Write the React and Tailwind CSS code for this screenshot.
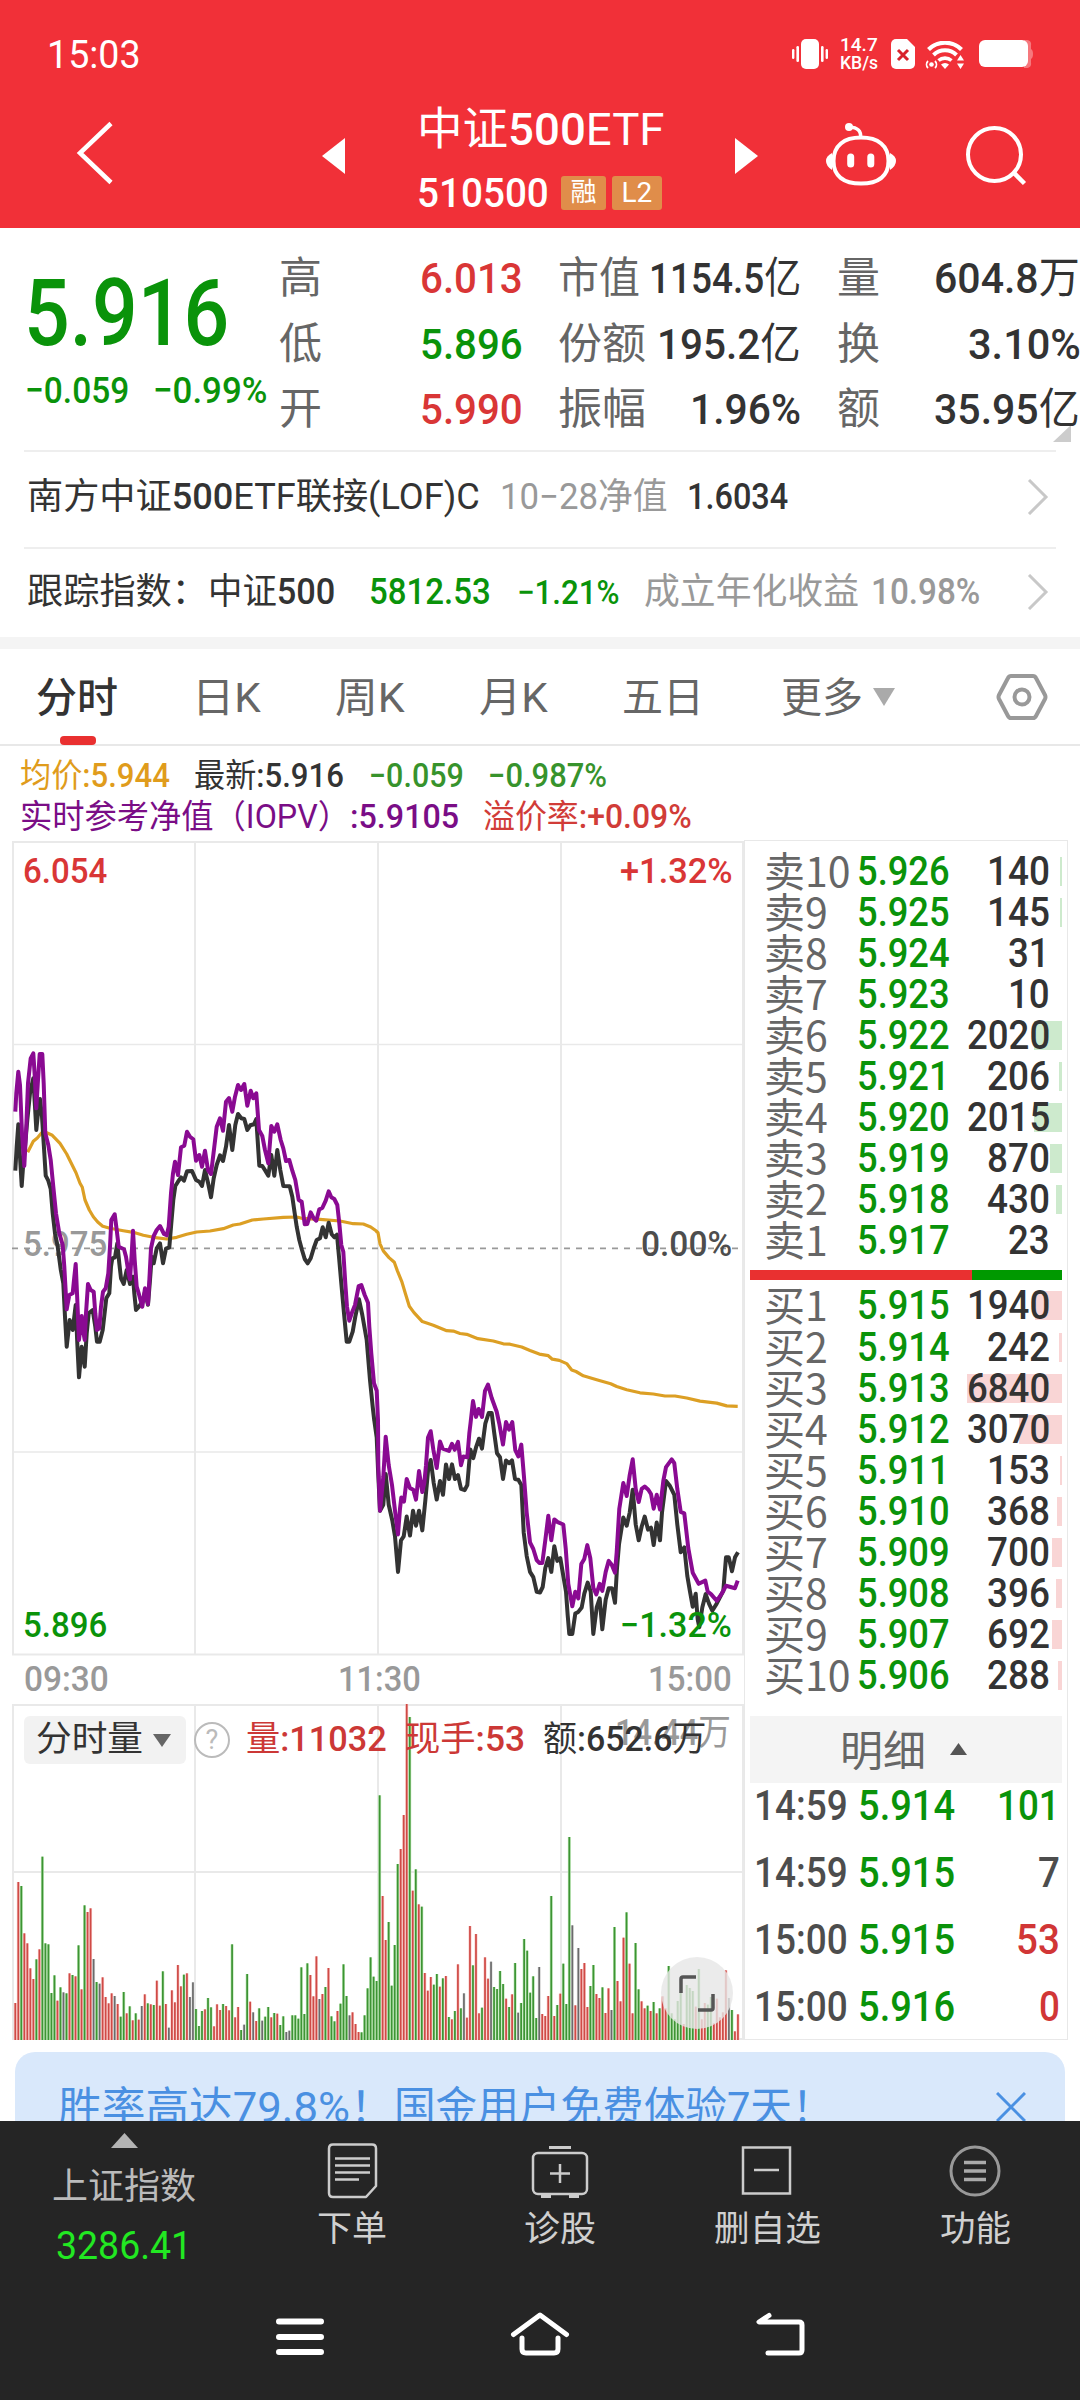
import { useLayoutEffect, useRef } from "react";

const GREEN = "text-[#0a930a]";
const RED = "text-[#d93636]";

// Text fitted horizontally to the width of its own box.
function Fit({ className = "", children }) {
  const box = useRef(null);
  const text = useRef(null);
  useLayoutEffect(() => {
    const natural = text.current.offsetWidth;
    const target = box.current.clientWidth;
    if (natural > 0 && target > 0) {
      text.current.style.transform = `scaleX(${target / natural})`;
    }
  }, []);
  return (
    <div ref={box} className={`flex-none whitespace-nowrap ${className}`}>
      <span ref={text} className="inline-block origin-left">{children}</span>
    </div>
  );
}

function StatusBar() {
  return (
    <div className="flex h-[108px] items-center text-white">
      <Fit className="ml-[47px] w-[94px] text-[38px] leading-[38px] mt-px">15:03</Fit>
      <svg className="ml-[651px] flex-none" width="36" height="30" viewBox="0 0 36 30" fill="#fff">
        <rect x="9" y="0" width="18" height="30" rx="5" />
        <rect x="0" y="10" width="2.4" height="10" rx="1.2" />
        <rect x="4.4" y="7" width="2.6" height="16" rx="1.3" />
        <rect x="29" y="7" width="2.6" height="16" rx="1.3" />
        <rect x="33.6" y="10" width="2.4" height="10" rx="1.2" />
      </svg>
      <div className="ml-[12px] flex flex-none flex-col text-[18px] leading-[18px] font-medium">
        <Fit className="w-[38px]">14.7</Fit>
        <Fit className="w-[38px]">KB/s</Fit>
      </div>
      <svg className="ml-[13px] flex-none" width="24" height="30" viewBox="0 0 24 30">
        <path d="M5 0h11l8 8v17a5 5 0 0 1-5 5H5a5 5 0 0 1-5-5V5a5 5 0 0 1 5-5z" fill="#fff" />
        <path d="M7 11l10 10M17 11L7 21" stroke="#d8232c" strokeWidth="3" />
      </svg>
      <svg className="ml-[10px] mt-px flex-none" width="39" height="28" viewBox="0 0 39 28" fill="none" stroke="#fff">
        <path d="M3.500 8.500a23.500 23.500 0 0 1 33 0" strokeWidth="4.200" />
        <path d="M8.500 14a16.500 16.500 0 0 1 23 0" strokeWidth="4" />
        <path d="M13.500 19.500a10 10 0 0 1 13 0" strokeWidth="3.600" />
        <path d="M16 23.500a6 6 0 0 1 8 0l-4 4.500z" fill="#fff" stroke="none" />
        <path d="M35.500 14l3.500 5.500h-7zM35.500 28l3.500-5.500h-7z" fill="#fff" stroke="none" />
        <circle cx="6.500" cy="23.500" r="2.300" fill="#fff" stroke="none" />
        <path d="M3 20a5 5 0 0 0 0 7M10 20a5 5 0 0 1 0 7" strokeWidth="1.800" />
      </svg>
      <svg className="ml-[15px] flex-none" width="54" height="28" viewBox="0 0 54 28">
        <path d="M45 0h3a4 4 0 0 1 4 5v4q2 1 2 5t-2 5v4a4 4 0 0 1-4 5h-3z" fill="#fff" opacity=".35" />
        <rect width="49" height="27" rx="6" fill="#fff" />
      </svg>
    </div>
  );
}

function Header() {
  return (
    <header className="h-[228px] flex-none bg-[#f13038]">
      <StatusBar />
      <div className="flex h-[120px] items-start text-white">
        <svg className="ml-[76px] mt-[13px] flex-none" width="38" height="64" viewBox="0 0 38 64">
          <path d="M35 2.500L4 32l31 29.500" fill="none" stroke="#fff" strokeWidth="4.500" />
        </svg>
        <svg className="ml-[207px] mt-[30px] flex-none" width="24" height="36" viewBox="0 0 24 36">
          <path d="M24 0v36L1 18z" fill="#fff" />
        </svg>
        <div className="ml-[72px] flex w-[251px] flex-none flex-col">
          <Fit className="w-[248px] text-[45px] leading-[44px]">中证<span className="font-medium">500</span>ETF</Fit>
          <div className="mt-[24px] flex h-[34px] items-center">
            <Fit className="w-[132px] text-[41px] leading-[34px] font-medium">510500</Fit>
            <div className="ml-[12px] h-[34px] w-[45px] rounded-[3px] bg-[#e08d4a] text-center text-[26px] leading-[33px]">融</div>
            <div className="ml-[6px] flex h-[34px] w-[50px] justify-center rounded-[3px] bg-[#e08d4a] text-[28px] leading-[34px]">
              <Fit className="w-[31px]">L2</Fit>
            </div>
          </div>
        </div>
        <svg className="ml-[67px] mt-[30px] flex-none" width="24" height="36" viewBox="0 0 24 36">
          <path d="M0 0v36l23-18z" fill="#fff" />
        </svg>
        <svg className="ml-[67px] mt-[14px] flex-none" width="70" height="64" viewBox="0 0 70 64" fill="none" stroke="#fff" strokeWidth="4">
          <path d="M35 15.500c17 0 27.500 8 27.500 23.500S52 61.500 35 61.500 7.500 54.500 7.500 39 18 15.500 35 15.500z" />
          <path d="M34.500 16c1-7-3-10.500-11-11" strokeWidth="3.500" />
          <circle cx="23" cy="5" r="4" fill="#fff" stroke="none" />
          <path d="M6 31q-6 3-6 8t6 9zM64 31q6 3 6 8t-6 9z" fill="#fff" stroke="none" />
          <path d="M24.700 35v7M44.800 35v7" strokeWidth="7" strokeLinecap="round" />
        </svg>
        <svg className="ml-[70px] mt-[18px] flex-none" width="62" height="60" viewBox="0 0 62 60" fill="none" stroke="#fff" strokeWidth="4">
          <circle cx="28.500" cy="28.500" r="26.500" />
          <path d="M47.500 46.500L58.500 57.500" strokeWidth="4.500" />
        </svg>
      </div>
    </header>
  );
}

function Quote() {
  return (
    <section className="flex h-[222px] flex-none items-start">
      <div className="flex w-[279px] flex-none flex-col">
        <Fit className={`ml-[24px] mt-[40px] w-[205px] text-[93px] leading-[92px] font-medium ${GREEN}`}>5.916</Fit>
        <div className={`mt-[12px] flex text-[37px] leading-[38px] ${GREEN}`}>
          <Fit className="ml-[25px] w-[104px] font-medium">−0.059</Fit>
          <Fit className="ml-[24px] w-[114px] font-medium">−0.99%</Fit>
        </div>
      </div>
      <div className="mt-[18px] flex flex-none flex-col text-[43px] leading-[65px] text-[#666]">
        <div className="flex h-[65px]">
          <div className="w-[141px] flex-none">高</div>
          <Fit className={`w-[103px] font-medium ${RED}`}>6.013</Fit>
          <Fit className="ml-[35px] w-[82px]">市值</Fit>
          <Fit className="ml-[9px] w-[152px] text-[#333]"><span className="font-medium">1154.5</span>亿</Fit>
          <div className="ml-[36px] w-[44px] flex-none">量</div>
          <Fit className="ml-[53px] w-[146px] text-[#333]"><span className="font-medium">604.8</span>万</Fit>
        </div>
        <div className="flex h-[66px] pt-px">
          <div className="w-[141px] flex-none">低</div>
          <Fit className={`w-[103px] font-medium ${GREEN}`}>5.896</Fit>
          <Fit className="ml-[35px] w-[88px]">份额</Fit>
          <Fit className="ml-[11px] w-[144px] text-[#333]"><span className="font-medium">195.2</span>亿</Fit>
          <div className="ml-[36px] w-[44px] flex-none">换</div>
          <Fit className="ml-[87px] w-[113px] font-medium text-[#333]">3.10%</Fit>
        </div>
        <div className="flex h-[65px]">
          <div className="w-[141px] flex-none">开</div>
          <Fit className={`w-[103px] font-medium ${RED}`}>5.990</Fit>
          <Fit className="ml-[35px] w-[88px]">振幅</Fit>
          <Fit className="ml-[44px] w-[111px] font-medium text-[#333]">1.96%</Fit>
          <div className="ml-[36px] w-[44px] flex-none">额</div>
          <Fit className="ml-[53px] w-[146px] text-[#333]"><span className="font-medium">35.95</span>亿</Fit>
        </div>
        <svg className="ml-[774px] -mt-[17px]" width="18" height="17" viewBox="0 0 18 17"><path d="M18 0v17H0z" fill="#ccc" /></svg>
      </div>
    </section>
  );
}

function Arrow({ className }) {
  return (
    <svg className={`flex-none ${className}`} width="22" height="36" viewBox="0 0 22 36">
      <path d="M2 1l17 17L2 35" fill="none" stroke="#c8c8c8" strokeWidth="3" />
    </svg>
  );
}

function FundRows() {
  return (
    <section className="flex-none border-b-[12px] border-[#f4f4f4]">
      <div className="mx-[24px] flex h-[99px] items-center border-y-2 border-[#eeeeee] pb-[6px] text-[36px] leading-[40px] text-[#333]">
        <Fit className="ml-[3px] w-[453px]">南方中证<span className="font-medium">500</span>ETF联接(LOF)C</Fit>
        <Fit className="ml-[20px] w-[168px] text-[#999]">10−28净值</Fit>
        <Fit className="ml-[19px] w-[101px] font-medium">1.6034</Fit>
        <Arrow className="ml-[239px]" />
      </div>
      <div className="mx-[24px] flex h-[88px] items-center pb-[2px] text-[36px] leading-[40px] text-[#333]">
        <Fit className="ml-[3px] w-[181px]">跟踪指数：</Fit>
        <Fit className="w-[127px]">中证<span className="font-medium">500</span></Fit>
        <Fit className={`ml-[34px] w-[122px] font-medium ${GREEN}`}>5812.53</Fit>
        <Fit className={`ml-[26px] w-[103px] text-[34px] font-medium ${GREEN}`}>−1.21%</Fit>
        <Fit className="ml-[24px] w-[215px] text-[#999]">成立年化收益</Fit>
        <Fit className="ml-[12px] w-[109px] font-medium text-[#999]">10.98%</Fit>
        <Arrow className="ml-[47px]" />
      </div>
    </section>
  );
}

function Tabs() {
  return (
    <nav className="flex h-[97px] flex-none items-start border-b-2 border-[#e8e8e8] text-[41px] leading-[98px] text-[#666]">
      <div className="relative ml-[36px] flex-none">
        <Fit className="w-[82px] font-medium text-[#333]">分时</Fit>
        <div className="absolute left-[24px] top-[87px] h-[9px] w-[36px] rounded-[4px] bg-[#e93030]" />
      </div>
      <Fit className="ml-[74px] w-[69px]">日K</Fit>
      <Fit className="ml-[74px] w-[70px]">周K</Fit>
      <Fit className="ml-[74px] w-[69px]">月K</Fit>
      <Fit className="ml-[74px] w-[82px]">五日</Fit>
      <Fit className="ml-[77px] w-[82px]">更多</Fit>
      <svg className="ml-[10px] mt-[39px] flex-none" width="22" height="18" viewBox="0 0 22 18"><path d="M0 0h22L11 18z" fill="#aaa" /></svg>
      <svg className="ml-[101px] mt-[24px] flex-none" width="52" height="48" viewBox="0 0 52 48" fill="none" stroke="#999" strokeWidth="4">
        <path d="M15 3h22q2 0 3 2l9 17q1 2 0 4l-9 17q-1 2-3 2H15q-2 0-3-2L3 26q-1-2 0-4l9-17q1-2 3-2z" />
        <circle cx="26" cy="24" r="7.500" />
      </svg>
    </nav>
  );
}

function Info() {
  return (
    <div className="flex h-[94px] flex-none flex-col pt-[9px] text-[33px] leading-[41px]">
      <div className="flex h-[41px]">
        <Fit className="ml-[20px] w-[150px] text-[#e09c1c]">均价<span className="font-medium">:5.944</span></Fit>
        <Fit className="ml-[24px] w-[150px] text-[#333]">最新<span className="font-medium">:5.916</span></Fit>
        <Fit className="ml-[25px] w-[95px] font-medium text-[#37932c]">−0.059</Fit>
        <Fit className="ml-[24px] w-[119px] font-medium text-[#37932c]">−0.987%</Fit>
      </div>
      <div className="flex h-[41px]">
        <Fit className="ml-[20px] w-[439px] text-[#7a0d86]">实时参考净值（IOPV）<span className="font-medium">:5.9105</span></Fit>
        <Fit className="ml-[24px] w-[209px] text-[#d13c38]">溢价率<span className="font-medium">:+0.09%</span></Fit>
      </div>
    </div>
  );
}

const AVG_AM = "83,457 100,424 112,414 125,398 140,398 157,406 180,430 200,462 228,518 240,550 247,562 255,600 268,630 280,650 293,666 308,679 330,685 370,692 400,697 430,706 460,712 500,717 530,712 560,703 590,696 630,693 670,686 700,675 720,672 757,660 790,657 850,652 890,651 905,655 960,658 1020,663 1060,671 1090,672 1112,681 1130,694";
const AVG_PM = "110,460 114,462 120,490 130,508 147,525 163,537 172,558 185,585 196,615 208,648 222,664 247,687 280,696 320,710 340,711 360,717 380,719 414,730 460,736 490,743 510,744 545,751 570,760 598,769 625,773 637,782 658,785 680,793 695,809 708,813 730,824 770,834 812,844 830,851 860,859 900,867 940,870 975,875 1005,875 1040,880 1080,888 1130,893 1160,900 1193,901";
const IOPV_AM = "46,335 49,280 55,215 60,255 66,400 73,498 78,400 84,250 92,175 100,160 104,225 109,325 114,240 119,162 127,162 131,250 136,400 145,435 152,480 160,560 168,640 178,700 188,735 193,800 200,928 208,885 218,880 222,840 227,792 232,900 237,1020 245,948 249,990 254,1020 258,940 264,852 272,870 281,875 286,940 291,990 298,985 303,920 309,875 317,865 325,820 330,740 334,660 344,643 350,690 356,740 372,748 378,770 386,822 390,838 395,760 399,692 404,780 410,860 416,880 427,920 435,865 444,912 449,820 453,745 461,708 470,690 480,678 492,702 500,706 506,680 513,580 519,520 525,485 534,525 543,442 553,437 561,395 570,410 580,418 588,482 598,465 606,500 615,452 624,510 633,522 641,455 650,380 660,355 669,392 678,305 687,294 697,335 705,290 714,255 723,270 733,252 742,317 752,272 760,295 769,280 777,390 787,408 795,450 805,490 814,378 823,395 832,373 842,420 850,445 858,483 868,480 877,512 886,540 896,600 905,605 914,673 922,672 932,637 941,655 949,662 958,628 967,624 977,602 986,574 994,592 1003,597 1012,615 1018,670 1024,735 1030,755 1036,850 1041,920 1048,962 1057,935 1065,915 1076,858 1084,855 1094,885 1104,908 1108,980 1114,1060 1122,1150 1130,1172 1134,1260";
const IOPV_PM = "114,936 115,1050 120,1165 130,1080 137,978 146,1050 156,1100 165,1165 174,1225 180,1160 184,1132 192,1142 200,1085 210,1108 220,1112 228,1137 237,1065 247,1118 253,1095 258,1050 264,980 272,964 280,1010 290,1057 300,990 308,1008 327,1014 336,996 344,1011 354,991 363,1050 370,1028 382,1030 388,970 392,940 399,888 408,928 416,908 426,928 435,862 444,846 455,880 470,915 478,945 489,998 498,941 507,960 517,941 526,1012 535,1028 544,998 552,1080 560,1170 570,1245 580,1262 590,1290 598,1297 607,1297 616,1240 625,1178 634,1240 643,1187 653,1194 670,1200 677,1260 685,1350 697,1407 706,1370 715,1387 724,1300 733,1287 742,1252 751,1285 760,1360 769,1377 779,1350 787,1368 797,1320 806,1292 815,1302 825,1322 830,1270 838,1160 850,1095 860,1128 869,1075 878,1035 887,1110 896,1143 905,1110 914,1104 925,1112 933,1123 941,1160 950,1125 960,1162 970,1090 978,1055 995,1035 1003,1045 1012,1110 1022,1168 1033,1172 1045,1260 1058,1322 1076,1350 1096,1342 1103,1370 1113,1376 1130,1393 1145,1375 1158,1355 1185,1361 1193,1342";
const PRICE_AM = "46,512 50,440 55,373 60,470 65,558 70,490 75,440 82,360 90,280 100,235 105,320 109,390 115,330 120,297 126,350 131,430 137,527 145,542 152,567 158,640 165,700 173,740 182,808 190,850 195,950 200,1040 209,960 218,990 227,915 232,1030 237,1132 245,1040 254,1100 260,1000 266,940 278,930 286,980 291,1025 299,1025 308,990 319,895 328,880 333,800 337,775 345,772 352,730 358,790 363,835 371,852 380,810 390,852 399,830 403,880 408,930 417,920 427,905 435,875 444,914 450,840 455,770 461,790 470,745 480,730 489,790 498,746 508,742 514,670 520,600 526,558 534,545 543,532 552,542 561,514 576,513 588,540 598,545 606,558 615,510 624,548 633,592 641,535 650,495 660,466 669,483 678,440 687,375 697,450 706,375 714,342 724,355 733,357 742,390 751,376 762,373 769,357 778,497 787,498 796,512 805,527 814,465 823,527 832,450 841,510 850,558 869,559 877,590 884,640 890,680 898,720 906,750 914,777 923,790 932,775 941,745 950,720 960,715 968,682 977,712 986,668 995,703 1003,712 1011,704 1017,770 1024,850 1032,940 1040,1025 1048,1025 1058,995 1066,950 1077,898 1087,945 1100,1020 1110,1140 1118,1220 1123,1262";
const PRICE_PM = "103,937 110,980 114,1060 120,1165 130,1150 137,1072 146,1150 157,1190 165,1230 174,1320 183,1240 191,1230 200,1180 210,1228 219,1165 228,1203 237,1165 247,1215 256,1140 264,1065 272,1037 281,1095 290,1137 300,1090 309,1125 318,1048 327,1085 336,1048 345,1085 354,1075 363,1110 374,1113 382,1100 391,1010 400,1032 408,1005 417,983 426,1008 436,945 446,918 455,918 463,970 471,1020 480,1030 489,1085 498,1038 508,1045 516,1038 525,1085 535,1087 544,1100 551,1220 560,1280 570,1320 580,1333 590,1370 600,1372 608,1358 616,1310 625,1285 634,1320 643,1255 652,1292 661,1285 670,1330 678,1370 683,1430 688,1477 697,1477 706,1425 715,1421 725,1410 733,1375 743,1347 752,1370 760,1477 770,1410 779,1387 787,1465 797,1390 806,1361 816,1361 825,1398 831,1310 837,1250 850,1182 860,1203 869,1170 878,1112 887,1200 896,1240 905,1205 914,1180 924,1213 933,1208 941,1252 950,1195 960,1240 966,1170 978,1090 990,1103 1003,1125 1012,1200 1022,1270 1033,1258 1042,1330 1050,1370 1058,1408 1067,1375 1073,1440 1078,1460 1087,1410 1097,1376 1107,1400 1117,1418 1130,1400 1150,1368 1158,1283 1166,1283 1176,1318 1185,1283 1194,1270";

// Joins the morning and afternoon samples into one path in chart pixels.
function toPath(am, pm) {
  const parse = (s) => s.split(" ").map((p) => p.split(",").map(Number));
  const a = parse(am).map(([x, y]) => [x / 3, y / 3 + 160]);
  const b = parse(pm).map(([x, y]) => [x / 3 + 340, y / 2.529 + 210]);
  return "M" + [...a, ...b].map(([x, y]) => `${x.toFixed(1)} ${y.toFixed(1)}`).join("L");
}

function PriceChart() {
  return (
    <div className="relative h-[816px]">
      <Fit className="absolute left-[23px] top-[387px] w-[84px] text-[35px] leading-[36px] font-medium text-[#999]">5.975</Fit>
      <svg className="absolute left-0 top-0" width="746" height="816" viewBox="0 0 746 816" fill="none" strokeLinejoin="round">
        <g stroke="#e9e9e9" strokeWidth="2">
          <path d="M13 2V815M195 2V815M378 2V815M561 2V815M743 2V815M12 2H744M12 814.500H744" />
          <path d="M12 204.500H744M12 612H744" strokeWidth="1.300" />
        </g>
        <path d="M12 408.300H744" stroke="#999" strokeWidth="1.800" strokeDasharray="6 6" />
        <path d={toPath(AVG_AM, AVG_PM)} stroke="#dc9f24" strokeWidth="3.200" />
        <path d={toPath(PRICE_AM, PRICE_PM)} stroke="#333" strokeWidth="4" />
        <path d={toPath(IOPV_AM, IOPV_PM)} stroke="#8a0a92" strokeWidth="4" />
      </svg>
      <div className="text-[35px] leading-[36px] font-medium">
        <Fit className={`absolute left-[23px] top-[14px] w-[84px] ${RED}`}>6.054</Fit>
        <Fit className={`absolute left-[620px] top-[14px] w-[113px] ${RED}`}>+1.32%</Fit>
        <Fit className="absolute left-[641px] top-[387px] w-[91px] text-[#4d4d4d]">0.00%</Fit>
        <Fit className={`absolute left-[23px] top-[768px] w-[84px] ${GREEN}`}>5.896</Fit>
        <Fit className={`absolute left-[620px] top-[768px] w-[112px] ${GREEN}`}>−1.32%</Fit>
      </div>
    </div>
  );
}

const VOLUME =
  "969r 606r 618g 760r 790r 865r 897r 838g 808r 530g 790g 793g 939g 886g 962r 922g 937k 940g 880r 885g 889r 796g 928r 676g 696r 685r 837k 906g 911k 892r 951r 970r 940r 948k 972r 1010g 936g 1000r 979g 1021r 1000g 1019r 978k 943r 970g 973r 975g 902r 977r 874g 972r 1043k 931r 967r 855r 919r 884g 880r 951k 907k 987g 1038g 993g 988r 954g 982g 1039r 973r 990r 972g 978r 991r 793g 1012r 981r 1050g 1034k 882g 965r 997k 1023r 985g 1022k 1010g 981g 1012r 999g 1001r 1035g 1009g 1056k 1052k 1006g 1006g 1016g 862g 1002g 850g 885r 949r 829r 957k 942r 921g 864r 1009g 1024g 993r 971g 853g 948g 1006k 997r 1032r 1056r 1057g 1006g 925g 832g 890g 903g " +
  "346g 648r 780r 726g 917g 795g 552g 507r 405r 72r 111g 632r 568g 673r 680g 879r 932r 891r 914g 882g 920r 895g 888r 1011g 1018r 993g 853r 985g 940k 1013r 738r 856g 762r 1000r 983g 832r 896r 845k 921g 927g 873g 912g 956r 981g 943r 849g 998k 969g 777g 812g 938g 889g 1014g 861k 1002r 1008r 948r 648g 1008r 975g 941r 851g 972g 471g 736k 976r 804k 867r 849r 981r 918g 855g 942r 954r 922g 999r 925r 990k 741g 903r 964r 773r 697g 851r 1000r 789g 928g 964r 985r 977g 993r 966g 1000r 985g 949r 985r 858g 1000g 1018g 963g 936g 1032r 915g 924g 933g 980r 867g 1018r 969r 974g 951g 1030r 956r 1012r 997r 871r 954k 990g 1054r 1003r";
const BAR_FILL = { r: "#cf4a46", g: "#3d9434", k: "#6b6b6b" };
const HALO_FILL = { r: "#f9c9c7", g: "#bfe8b8", k: "#dddddd" };

function VolumeChart() {
  const bars = VOLUME.split(" ").map((s, i) => ({
    x: 15.300 + i * 3.011,
    h: (1080 - parseInt(s, 10)) / 3,
    c: s.slice(-1),
  }));
  return (
    <div className="relative h-[336px]">
      <svg className="absolute left-0 top-0" width="746" height="336" viewBox="0 0 746 336">
        <path d="M13 0V336M195 0V336M378 0V336M561 0V336M743 0V336M12 1H744M12 168H744M12 335H744" stroke="#e9e9e9" strokeWidth="2" />
        {bars.map((b, i) => (
          <rect key={`h${i}`} x={b.x - 1.500} y={336 - b.h} width="3" height={b.h} fill={HALO_FILL[b.c]} />
        ))}
        {bars.map((b, i) => (
          <rect key={i} x={b.x - 0.850} y={336 - b.h} width="1.700" height={b.h} fill={BAR_FILL[b.c]} />
        ))}
      </svg>
      <div className="absolute left-[615px] top-[11px] text-[36px] leading-[36px] text-[#999]">
        <Fit className="w-[116px]"><span className="font-medium">14.44</span>万</Fit>
      </div>
      <div className="absolute left-[24px] top-[12px] flex h-[48px] items-center text-[35px] leading-[48px]">
        <div className="flex h-[48px] w-[162px] items-center rounded-[6px] bg-[#f2f2f2] text-[#333]">
          <Fit className="ml-[12px] w-[107px]">分时量</Fit>
          <svg className="ml-[10px] flex-none" width="18" height="13" viewBox="0 0 18 13"><path d="M0 0h18L9 13z" fill="#666" /></svg>
        </div>
        <div className="ml-[8px] flex h-[36px] w-[36px] items-center justify-center rounded-full border-[2.500px] border-[#bbb] text-[27px] leading-[30px] text-[#bbb]">?</div>
        <Fit className="ml-[16px] w-[141px] text-[#cc3836]">量<span className="font-medium">:11032</span></Fit>
        <Fit className="ml-[18px] w-[120px] text-[#cc3836]">现手<span className="font-medium">:53</span></Fit>
        <Fit className="ml-[18px] w-[164px] text-[#333]">额<span className="font-medium">:652.6</span>万</Fit>
      </div>
      <div className="absolute left-[661px] top-[253px] flex h-[72px] w-[72px] items-center justify-center rounded-full bg-[#e6e6e6]/80">
        <svg width="38" height="38" viewBox="0 0 38 38" fill="none" stroke="#555" strokeWidth="3.500">
          <path d="M3 19V5q0-2 2-2h13M35 20v14q0 2-2 2H20" />
        </svg>
      </div>
    </div>
  );
}

const SELLS = [
  ["10", "5.926", "140"], ["9", "5.925", "145"], ["8", "5.924", "31"], ["7", "5.923", "10"], ["6", "5.922", "2020"],
  ["5", "5.921", "206"], ["4", "5.920", "2015"], ["3", "5.919", "870"], ["2", "5.918", "430"], ["1", "5.917", "23"],
];
const BUYS = [
  ["1", "5.915", "1940"], ["2", "5.914", "242"], ["3", "5.913", "6840"], ["4", "5.912", "3070"], ["5", "5.911", "153"],
  ["6", "5.910", "368"], ["7", "5.909", "700"], ["8", "5.908", "396"], ["9", "5.907", "692"], ["10", "5.906", "288"],
];
const QTY_W = { 2: "w-[42px]", 3: "w-[63px]", 4: "w-[83px]" };
const LABEL_W = { 1: "w-[64px]", 2: "w-[87px]" };

function BookRow({ side, row, tint }) {
  const [level, price, qty] = row;
  const depth = Number(qty) < 100 ? 0 : Math.max(1, Math.round(Number(qty) * 0.0139));
  return (
    <div className="relative flex h-[41.050px] items-center text-[41px] leading-[41px]">
      <div className={`absolute right-[5px] top-[6px] h-[29px] ${tint}`} style={{ width: depth }} />
      <div className="relative -top-[2px] w-[93px] flex-none pl-[19px] font-['Noto_Sans_CJK_SC'] text-[#666]">
        <Fit className={LABEL_W[level.length]}>{side}{level}</Fit>
      </div>
      <Fit className={`ml-[19px] w-[93px] font-medium ${GREEN}`}>{price}</Fit>
      <div className="relative flex flex-1 justify-end pr-[17px] font-medium text-[#333]">
        <Fit className={QTY_W[qty.length]}>{qty}</Fit>
      </div>
    </div>
  );
}

const TICKS = [
  ["14:59", "5.914", "101", "text-[#0a930a]", "w-[63px]"],
  ["14:59", "5.915", "7", "text-[#4d4d4d]", "w-[22px]"],
  ["15:00", "5.915", "53", "text-[#d13636]", "w-[44px]"],
  ["15:00", "5.916", "0", "text-[#d13636]", "w-[21px]"],
];

function OrderBook() {
  return (
    <aside className="h-[1200px] w-[324px] flex-none border border-[#e8e8e8] pt-[10px]">
      {SELLS.map((r) => <BookRow key={r[0]} side="卖" row={r} tint="bg-[#cdeacd]" />)}
      <div className="ml-[5px] mt-[9px] flex h-[10px] w-[312px] bg-[#009900]">
        <div className="w-[222px] bg-[#e93030]" />
      </div>
      <div className="mt-[5px]">
        {BUYS.map((r) => <BookRow key={r[0]} side="买" row={r} tint="bg-[#f9d5d5]" />)}
      </div>
      <div className="ml-[5px] mt-[20px] flex h-[67px] w-[312px] items-center bg-[#f4f4f4] text-[42px] leading-[67px] text-[#666]">
        <Fit className="ml-[90px] w-[86px] pt-[4px]">明细</Fit>
        <svg className="ml-[24px] flex-none" width="17" height="12" viewBox="0 0 17 12"><path d="M0 12h17L8.500 0z" fill="#555" /></svg>
      </div>
      <div className="-mt-[11px]">
        {TICKS.map(([time, price, qty, color, width], i) => (
          <div key={i} className="flex h-[67px] items-center text-[42px] leading-[67px] font-medium">
            <Fit className="ml-[9px] w-[94px] font-medium text-[#4d4d4d]">{time}</Fit>
            <Fit className={`ml-[10px] w-[97px] ${GREEN}`}>{price}</Fit>
            <div className={`flex flex-1 justify-end pr-[7px] ${color}`}>
              <Fit className={width}>{qty}</Fit>
            </div>
          </div>
        ))}
      </div>
    </aside>
  );
}

function Banner() {
  return (
    <div className="mx-[15px] mt-[12px] flex h-[69px] flex-none items-start overflow-hidden rounded-t-[20px] bg-[#d9e8fb] text-[42px] leading-[42px] text-[#4a90e2]">
      <Fit className="ml-[43px] mt-[35px] w-[336px]">胜率高达79.8%！</Fit>
      <Fit className="mt-[35px] w-[440px]">国金用户免费体验7天！</Fit>
      <svg className="ml-[162px] mt-[40px] flex-none" width="30" height="30" viewBox="0 0 30 30">
        <path d="M1 1l28 28M29 1L1 29" stroke="#4a90e2" strokeWidth="3" />
      </svg>
    </div>
  );
}

function Action({ className, label, width, children }) {
  return (
    <div className={`flex flex-none flex-col items-center ${className}`}>
      <svg width="60" height="60" viewBox="0 0 60 60" fill="none" stroke="#ccc" strokeWidth="2.500" strokeLinejoin="round">{children}</svg>
      <Fit className={`mt-[9px] text-[35px] leading-[42px] text-[#d0d0d0] ${width}`}>{label}</Fit>
    </div>
  );
}

function BottomBar() {
  return (
    <footer className="h-[279px] flex-none bg-[#252525]">
      <div className="flex h-[160px] items-start">
        <div className="ml-[52px] flex w-[144px] flex-none flex-col items-center">
          <svg className="mt-[12px]" width="27" height="15" viewBox="0 0 27 15"><path d="M13.500 0L27 15H0z" fill="#b4b4b4" /></svg>
          <Fit className="mt-[18px] w-[144px] text-[36px] leading-[42px] text-[#bbb]">上证指数</Fit>
          <Fit className="mt-[18px] w-[136px] text-[38px] leading-[40px] text-[#22e822]">3286.41</Fit>
        </div>
        <Action className="ml-[106px] mt-[19px] w-[100px]" label="下单" width="w-[70px]">
          <path d="M11 4.500h39q4 0 4 4V46l-10 11H11q-4 0-4-4V8.500q0-4 4-4z" />
          <path d="M13 18.500h35M13 25.500h35M13 32.500h35M13 39.500h24" />
        </Action>
        <Action className="ml-[108px] mt-[19px] w-[100px]" label="诊股" width="w-[72px]">
          <rect x="3" y="13" width="54" height="41" rx="5" />
          <path d="M19 7.500h22M11 56.500h10M39 56.500h10" strokeWidth="3" />
          <path d="M20 33.500h20M30 24v19" />
        </Action>
        <Action className="ml-[102px] mt-[19px] w-[110px]" label="删自选" width="w-[107px]">
          <path d="M6 7.500h47v46H6zM17 30h25" strokeLinejoin="miter" />
        </Action>
        <Action className="ml-[103px] mt-[19px] w-[100px]" label="功能" width="w-[71px]">
          <circle cx="30" cy="31" r="24" stroke="#999" strokeWidth="3" />
          <path d="M19 22.500h22M19 31h22M19 39.500h22" stroke="#aaa" strokeWidth="3.500" />
        </Action>
      </div>
      <div className="flex h-[119px] items-start text-white">
        <svg className="ml-[276px] mt-[36px] flex-none" width="48" height="40" viewBox="0 0 48 40">
          <path d="M3 4.500h42M3 20h42M3 35h42" stroke="#fff" strokeWidth="6" strokeLinecap="round" />
        </svg>
        <svg className="ml-[185px] mt-[29px] flex-none" width="62" height="46" viewBox="0 0 62 46" fill="none" stroke="#fff" strokeWidth="5" strokeLinecap="round" strokeLinejoin="round">
          <path d="M4.500 24.500L31 5l26.500 19.500" />
          <path d="M13 28v11q0 4 4 4h28q4 0 4-4V28" />
        </svg>
        <svg className="ml-[183px] mt-[30px] flex-none" width="52" height="46" viewBox="0 0 52 46" fill="none" stroke="#fff" strokeWidth="5" strokeLinecap="round" strokeLinejoin="round">
          <path d="M15 4.500L5 11h40q3 0 3 3v25q0 3-3 3H14" />
        </svg>
      </div>
    </footer>
  );
}

export default function App() {
  return (
    <div className="flex h-[2400px] w-[1080px] flex-col overflow-hidden bg-white font-[Roboto,'Noto_Sans_CJK_SC',sans-serif]">
      <Header />
      <Quote />
      <FundRows />
      <Tabs />
      <Info />
      <div className="flex h-[1200px] flex-none">
        <div className="w-[744px] flex-none">
          <PriceChart />
          <div className="flex h-[48px] items-center text-[35px] leading-[48px] font-medium text-[#999]">
            <Fit className="ml-[24px] w-[85px]">09:30</Fit>
            <Fit className="ml-[229px] w-[83px]">11:30</Fit>
            <Fit className="ml-[227px] w-[84px]">15:00</Fit>
          </div>
          <VolumeChart />
        </div>
        <OrderBook />
      </div>
      <Banner />
      <BottomBar />
    </div>
  );
}
